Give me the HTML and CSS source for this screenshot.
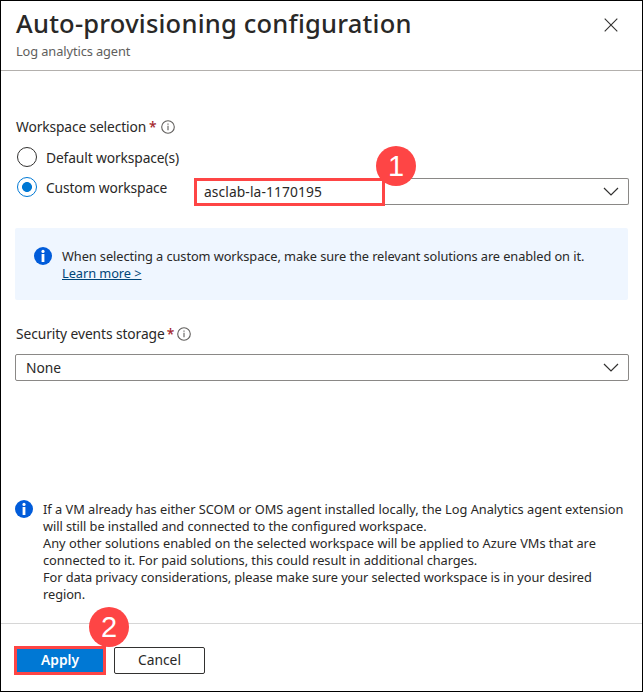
FILE: index.html
```html
<!DOCTYPE html>
<html lang="en">
<head>
<meta charset="utf-8">
<title>Auto-provisioning configuration</title>
<link rel="stylesheet" href="styles.css">
</head>
<body>
<main class="panel">
  <header class="header">
    <div>
      <h1 class="title"><span>Auto-provisioning configuration</span></h1>
      <p class="subtitle"><span>Log analytics agent</span></p>
    </div>
    <svg class="close" viewBox="0 0 14 14"><path d="M.7.7 13.3 13.3M13.3.7.7 13.3"/></svg>
  </header>
  <section class="content">
    <div class="label"><span class="label-workspace">Workspace selection</span><b class="required">*</b>
      <svg class="hint" viewBox="0 0 14 14"><circle cx="7" cy="7" r="6.3"/><path d="M7 5.7v4.6M7 3.5v1.2"/></svg>
    </div>
    <div class="option"><i class="radio"></i><span class="default-text">Default workspace(s)</span></div>
    <div class="option custom">
      <i class="radio checked"></i><span class="custom-text">Custom workspace</span>
      <div class="select workspace">
        <div class="highlight"><span>asclab-la-1170195</span></div>
        <svg class="chevron" viewBox="0 0 16 10"><path d="m1 1 7 7 7-7"/></svg>
        <div class="step step-one">1</div>
      </div>
    </div>
    <div class="notice">
      <svg class="info" viewBox="0 0 18 18"><circle cx="9" cy="9" r="9"/><circle class="mark" cx="9" cy="4.4" r="1.6"/><path class="mark" d="M7.6 7h2.8v8H7.6z"/></svg>
      <div class="lines"><span class="n1">When selecting a custom workspace, make sure the relevant solutions are enabled on it.</span><a class="n2">Learn more &gt;</a></div>
    </div>
    <div class="label security"><span class="label-security">Security events storage</span><b class="required">*</b>
      <svg class="hint" viewBox="0 0 14 14"><circle cx="7" cy="7" r="6.3"/><path d="M7 5.7v4.6M7 3.5v1.2"/></svg>
    </div>
    <div class="select storage"><span>None</span>
      <svg class="chevron" viewBox="0 0 16 10"><path d="m1 1 7 7 7-7"/></svg>
    </div>
    <div class="remarks">
      <svg class="info" viewBox="0 0 18 18"><circle cx="9" cy="9" r="9"/><circle class="mark" cx="9" cy="4.4" r="1.6"/><path class="mark" d="M7.6 7h2.8v8H7.6z"/></svg>
      <div class="lines">
        <span class="r1">If a VM already has either SCOM or OMS agent installed locally, the Log Analytics agent extension</span>
        <span class="r2">will still be installed and connected to the configured workspace.</span>
        <span class="r3">Any other solutions enabled on the selected workspace will be applied to Azure VMs that are</span>
        <span class="r4">connected to it. For paid solutions, this could result in additional charges.</span>
        <span class="r5">For data privacy considerations, please make sure your selected workspace is in your desired</span>
        <span class="r6">region.</span>
      </div>
    </div>
  </section>
  <footer class="footer">
    <div class="button apply"><span>Apply</span><div class="step step-two">2</div></div>
    <div class="button cancel"><span>Cancel</span></div>
  </footer>
</main>
</body>
</html>
```
FILE: styles.css
```css
* { box-sizing: border-box; }
body { margin: 0; background: #fff; }
.panel {
  width: 643px; height: 692px; border: 1px solid #000;
  display: flex; flex-direction: column; overflow: hidden;
  font-family: "Noto Sans", "Open Sans", sans-serif; font-size: 13.8px; color: #292827; white-space: nowrap;
}
.header { height: 70px; flex: none; border-bottom: 1px solid #b3b0ad; padding: 5px 24px 0 15px; display: flex; justify-content: space-between; }
.title { margin: 0; font-size: 25.5px; font-weight: 500; line-height: 34px; letter-spacing: .22px; }
.subtitle { margin: 2px 0 0; font-size: 12.8px; line-height: 18px; color: #605e5c; letter-spacing: -.09px; }
.close { width: 14px; height: 14px; margin-top: 12px; fill: none; stroke: #323130; stroke-width: 1.1; }
.content { flex: 1; padding: 46px 13px 0 14px; display: flex; flex-direction: column; }
.label { height: 20px; display: flex; align-items: center; padding-left: 1px; letter-spacing: -.13px; }
.label span { margin-top: -2px; }
.label-security { letter-spacing: -.09px; }
.required { color: #a4262c; margin: -2px 4px 0 3px; font-weight: 500; letter-spacing: 0; }
.label-security + .required { margin-right: 3px; margin-left: 2px; }
.hint { width: 14px; height: 14px; fill: none; stroke: #605e5c; stroke-width: 1.1; }
.option { display: flex; align-items: center; height: 20px; margin-top: 10px; padding-left: 2px; letter-spacing: -.12px; }
.radio { width: 20px; height: 20px; flex: none; border: 1px solid #323130; border-radius: 50%; margin-right: 9px; }
.radio.checked { border-color: #0078d4; background: radial-gradient(circle, #0078d4 4.6px, transparent 5.3px); }
.option.custom { height: 28px; margin-top: 10px; justify-content: flex-start; }
.custom .radio { margin-top: -8px; }
.custom-text { width: 148px; margin-top: -8px; flex: none; }
.select { border: 1px solid #8a8886; border-radius: 2px; height: 27px; display: flex; align-items: center; justify-content: space-between; padding-right: 9px; }
.workspace { position: relative; flex: 1; border-left: 0; margin-top: 1px; }
.highlight { width: 191px; height: 28px; border: 3px solid #fe4545; display: flex; align-items: center; padding-left: 7px; flex: none; letter-spacing: .1px; }
.chevron { width: 16px; height: 10px; fill: none; stroke: #323130; stroke-width: 1.2; }
.step { position: absolute; width: 40px; height: 40px; border-radius: 50%; background: #fe4545; color: #fff; font: 29px/40px "Liberation Sans", sans-serif; text-align: center; letter-spacing: 0; }
.step-one { left: 182px; top: -33px; }
.notice { height: 72px; margin: 23px 1px 0 0; background: #eff6ff; border-radius: 2px; display: flex; padding: 19px 0 0 19px; gap: 10px; font-size: 12.8px; }
.notice .lines { margin-top: 1px; }
.info { width: 18px; height: 18px; flex: none; fill: #015cda; }
.mark { fill: #fff; }
.lines { display: flex; flex-direction: column; align-items: flex-start; line-height: 17px; letter-spacing: -.06px; }
.n1 { letter-spacing: -.08px; }
.n2 { color: #004578; text-decoration: underline; }
.security { margin-top: 24px; }
.storage { margin-top: 10px; padding-left: 10px; }
.remarks { margin-top: 119px; display: flex; gap: 10px; font-size: 12.8px; }
.remarks .lines { margin-top: 1px; }
.r1 { letter-spacing: -.02px; }
.r3 { letter-spacing: -.01px; }
.r5 { letter-spacing: -.09px; }
.footer { height: 68px; flex: none; border-top: 1px solid #d6d6d6; display: flex; gap: 8px; padding: 22px 0 0 13px; }
.button { display: flex; align-items: center; justify-content: center; }
.button > span { margin-top: -2px; }
.apply { position: relative; width: 92px; height: 29px; border: 3px solid #fe4545; background: #0078d4; color: #fff; font-weight: 600; }
.cancel { width: 91px; height: 27px; margin-top: 1px; border: 1px solid #323130; border-radius: 2px; }
.step-two { left: 72px; top: -42px; font-weight: 400; }
```
